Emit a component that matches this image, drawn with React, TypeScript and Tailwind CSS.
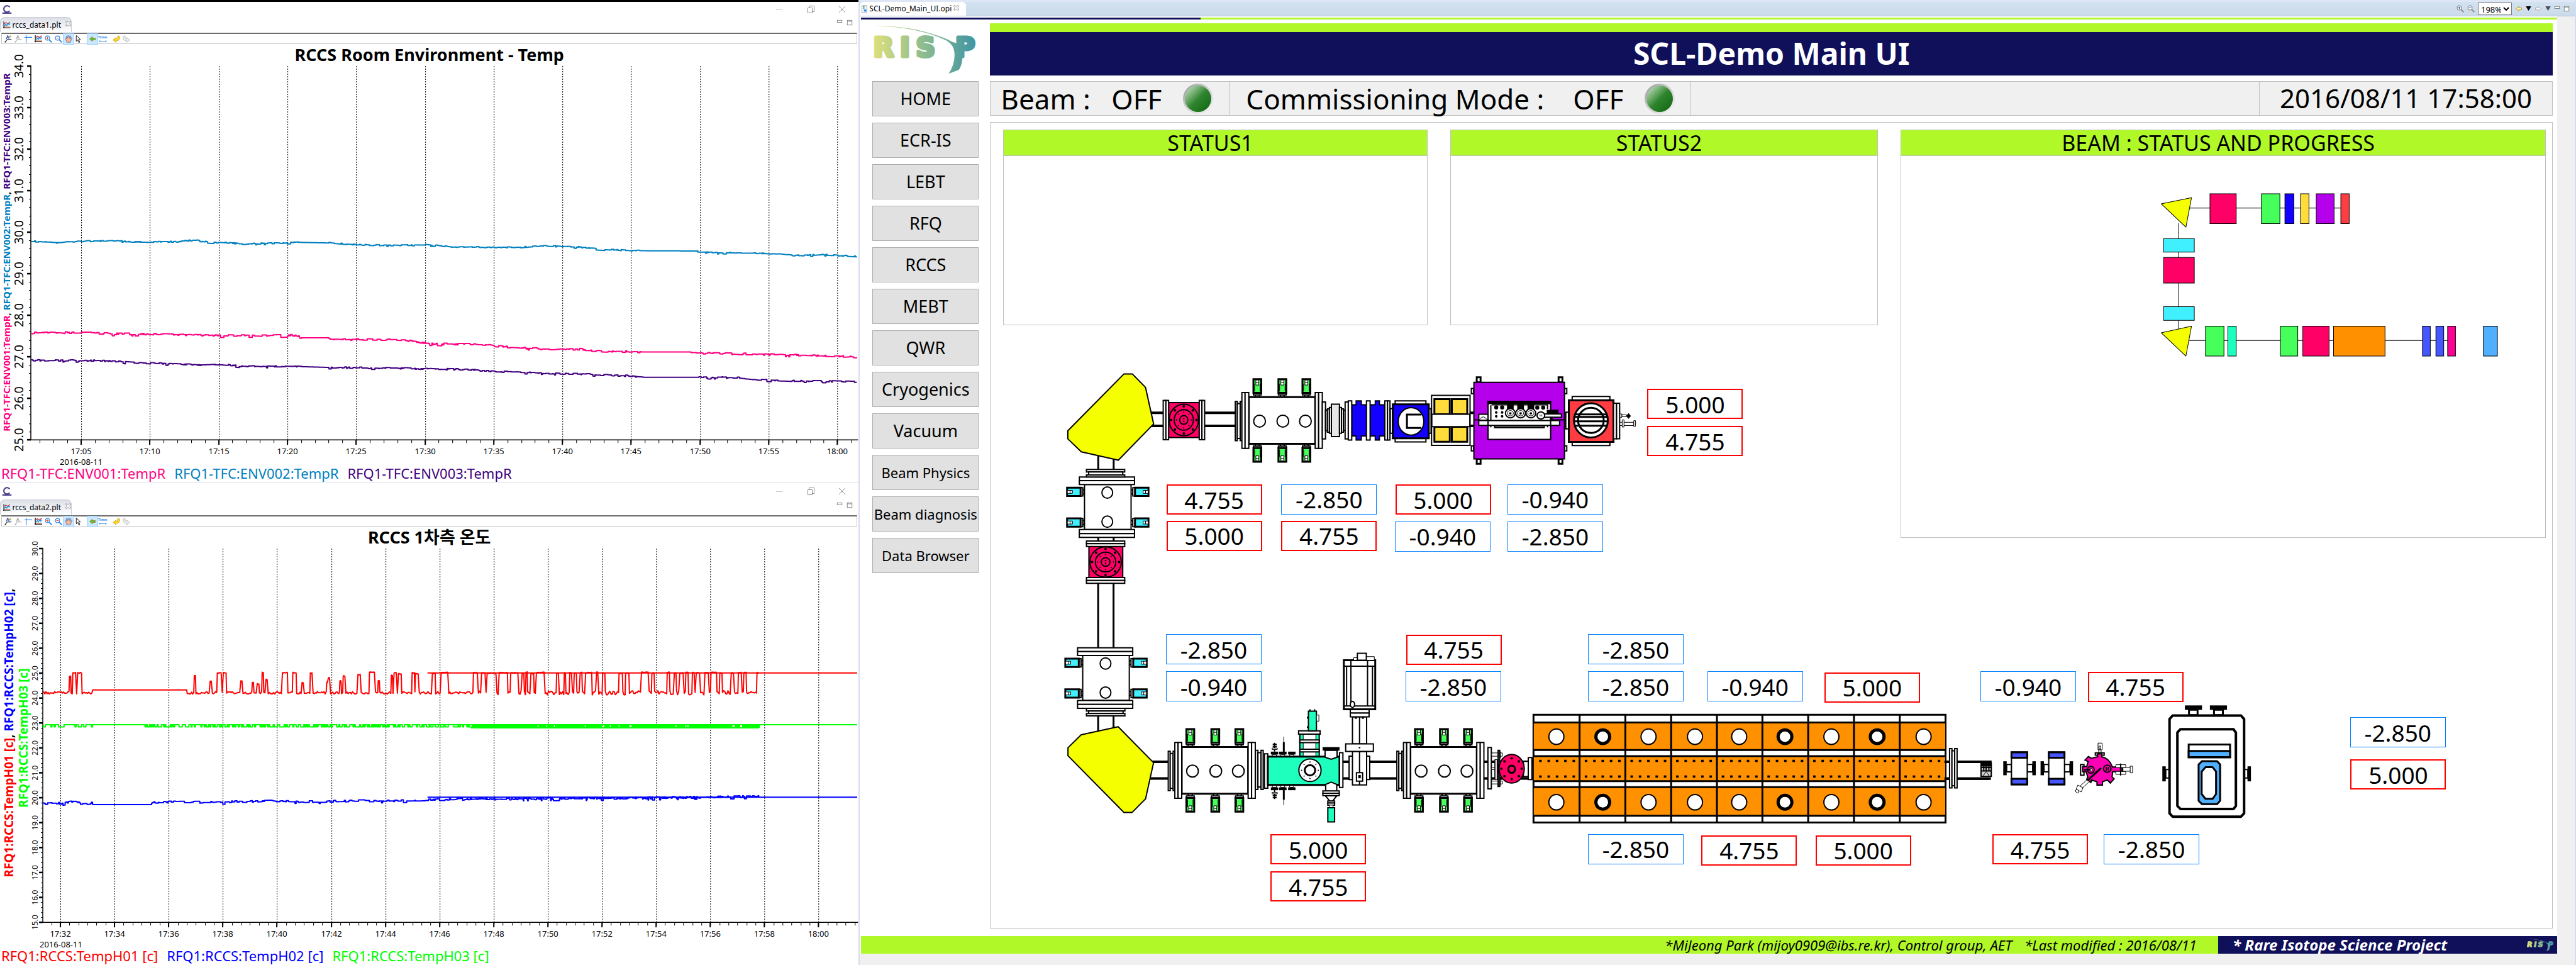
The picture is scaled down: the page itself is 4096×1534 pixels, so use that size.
import React from "react";

const PINK = "#ff0066";
const GREEN = "#46ff5a";
const BLUE = "#1400ff";
const YELLOW = "#ffdc3c";
const TEAL = "#1effbe";
const CYAN = "#41f0ff";
const ORANGE = "#ff9100";
const INDIGO = "#4656ff";
const SKY = "#50b0ff";

/* ---------- drawing primitives: edges are given as x1,y1,x2,y2 ---------- */

type BoxProps = { b: [number, number, number, number]; f?: string; w?: number };
const B = ({ b, f = "#fff", w = 2 }: BoxProps) => (
  <rect x={b[0]} y={b[1]} width={b[2] - b[0]} height={b[3] - b[1]} fill={f} stroke="#000" strokeWidth={w} vectorEffect="non-scaling-stroke" />
);
const E = ({ c, r, f = "#fff", w = 2 }: { c: [number, number]; r: [number, number]; f?: string; w?: number }) => (
  <ellipse cx={c[0]} cy={c[1]} rx={r[0]} ry={r[1]} fill={f} stroke="#000" strokeWidth={w} vectorEffect="non-scaling-stroke" />
);
const L = ({ d, w = 2 }: { d: string; w?: number }) => (
  <path d={d} fill="none" stroke="#000" strokeWidth={w} vectorEffect="non-scaling-stroke" />
);
const P = ({ p, f = "#fff", w = 2 }: { p: string; f?: string; w?: number }) => (
  <polygon points={p} fill={f} stroke="#000" strokeWidth={w} strokeLinejoin="round" vectorEffect="non-scaling-stroke" />
);
const Dots = ({ c, r, s }: { c: [number, number]; r: [number, number]; s: [number, number] }) => (
  <g>
    {[0, 1, 2, 3, 4, 5, 6, 7].map((k) => {
      const a = (k * Math.PI) / 4;
      return <ellipse key={k} cx={c[0] + r[0] * Math.cos(a)} cy={c[1] + r[1] * Math.sin(a)} rx={s[0]} ry={s[1]} fill="#000" />;
    })}
  </g>
);

const GreenPlug = ({ x }: { x: number }) => (
  <g>
    <B b={[x - 8, 248, x + 8, 265]} />
    <B b={[x - 16, 236, x + 16, 250]} />
    <B b={[x - 16, 144, x + 16, 236]} f={GREEN} w={3} />
    <B b={[x - 6, 150, x + 6, 184]} w={1} />
    <L d={`M${x - 6} 166H${x + 6}`} w={1} />
    <L d={`M${x - 11} 176V226M${x + 11} 176V226`} w={1} />
  </g>
);

const Chamber = () => (
  <g>
    <g>
      <GreenPlug x={844} />
      <GreenPlug x={946} />
      <GreenPlug x={1044} />
    </g>
    <g transform="translate(0 843) scale(1 -1)">
      <GreenPlug x={844} />
      <GreenPlug x={946} />
      <GreenPlug x={1044} />
    </g>
    <B b={[754, 293, 762, 557]} />
    <B b={[762, 308, 774, 542]} />
    <B b={[774, 293, 781, 557]} />
    <B b={[809, 265, 1080, 578]} w={3} />
    <B b={[781, 234, 794, 609]} />
    <B b={[794, 234, 809, 609]} />
    <B b={[1080, 234, 1094, 609]} />
    <B b={[1094, 234, 1109, 609]} />
    <E c={[853, 426]} r={[24, 40]} />
    <E c={[948, 426]} r={[24, 40]} />
    <E c={[1040, 426]} r={[24, 40]} />
  </g>
);

const CyanPlug = ({ y }: { y: number }) => (
  <g>
    <B b={[131, y + 14, 140, y + 42]} />
    <B b={[122, y, 132, y + 56]} />
    <B b={[68, y, 123, y + 56]} f={CYAN} w={3} />
    <B b={[69, y + 18, 90, y + 38]} w={1} />
    <L d={`M80 ${y + 18}V${y + 38}`} w={1} />
  </g>
);

const UprightChamber = () => (
  <g>
    {[873, 1079].map((y) => (
      <g key={y}>
        <CyanPlug y={y} />
        <g transform="translate(468 0) scale(-1 1)">
          <CyanPlug y={y} />
        </g>
      </g>
    ))}
    <B b={[139, 852, 329, 1154]} />
    <B b={[118, 801, 343, 826]} />
    <B b={[118, 826, 343, 852]} />
    <B b={[118, 1154, 343, 1181]} />
    <B b={[118, 1181, 343, 1207]} />
    <E c={[232, 906]} r={[22, 38]} />
    <E c={[232, 1101]} r={[22, 38]} />
  </g>
);

const Target = ({ c, r }: { c: [number, number]; r: [number, number] }) => (
  <g>
    <E c={c} r={r} f={PINK} />
    <Dots c={c} r={[r[0] * 0.86, r[1] * 0.86]} s={[5, 9]} />
    <E c={c} r={[r[0] * 0.65, r[1] * 0.65]} f={PINK} />
    <Dots c={c} r={[r[0] * 0.5, r[1] * 0.5]} s={[2, 5]} />
    <E c={c} r={[r[0] * 0.28, r[1] * 0.28]} f={PINK} />
    <ellipse cx={c[0]} cy={c[1] - 9} rx={3} ry={5} />
    <ellipse cx={c[0]} cy={c[1] + 9} rx={3} ry={5} />
  </g>
);

const UpperLine = () => (
  <g transform="translate(2350 800) scale(.54847 .33333)">
    <L d="M400 370H756M400 458H756" w={4} />
    <L d="M195 640V750M258 640V750M195 1200V1235M258 1200V1235" w={3} />
    <P p="300,109 334,109 388,200 421,445 277,688 126,632 71,545 71,491" f="#f5ff00" w={2} />
    <B b={[482, 302, 607, 536]} f={PINK} />
    <B b={[460, 287, 471, 551]} />
    <B b={[471, 287, 482, 551]} />
    <B b={[607, 287, 618, 551]} />
    <B b={[618, 287, 629, 551]} />
    <Target c={[544, 418]} r={[60, 106]} />
    <Chamber />
    <B b={[1109, 297, 1122, 546]} />
    <B b={[1122, 352, 1130, 490]} />
    <B b={[1130, 344, 1138, 500]} />
    <B b={[1138, 334, 1146, 508]} />
    <B b={[1146, 312, 1179, 530]} f="#e6e6e6" />
    <B b={[1179, 334, 1187, 508]} />
    <B b={[1187, 344, 1195, 500]} />
    <B b={[1195, 352, 1202, 490]} />
    <B b={[1202, 297, 1215, 546]} />
    <B b={[1247, 290, 1268, 553]} f={BLUE} />
    <B b={[1325, 290, 1342, 553]} f={BLUE} />
    <B b={[1229, 316, 1291, 526]} f={BLUE} />
    <B b={[1304, 316, 1364, 526]} f={BLUE} />
    <rect x={1249} y={296} width={17} height={250} fill={BLUE} />
    <rect x={1327} y={296} width={13} height={250} fill={BLUE} />
    <B b={[1215, 290, 1229, 553]} />
    <B b={[1289, 290, 1304, 553]} />
    <B b={[1364, 290, 1375, 553]} />
    <B b={[1375, 290, 1385, 553]} />
    <UprightChamber />
    <B b={[147, 750, 303, 767]} />
    <B b={[156, 767, 295, 787]} />
    <B b={[147, 787, 303, 801]} />
    <B b={[157, 1268, 295, 1476]} f={PINK} />
    <Target c={[225, 1372]} r={[64, 102]} />
    <B b={[147, 1231, 303, 1249]} />
    <B b={[147, 1249, 303, 1268]} />
    <B b={[147, 1476, 303, 1496]} />
    <B b={[147, 1496, 303, 1515]} />
  </g>
);

const SourceEnd = () => (
  <g transform="translate(3050 800) scale(.57398 .33333)">
    <B b={[105, 342, 114, 508]} />
    <B b={[255, 342, 264, 508]} />
    <B b={[124, 290, 244, 566]} />
    <B b={[115, 313, 255, 541]} f={BLUE} w={3} />
    <E c={[186, 428]} r={[50, 92]} />
    <L d="M226 382H170V472H226" w={3} />
    <L d="M414 370H434M414 458H434" w={4} />
    <B b={[266, 253, 416, 589]} />
    {[277, 345].map((x) => (
      <g key={x}>
        <B b={[x, 278, x + 60, 380]} f={YELLOW} w={3} />
        <B b={[x, 464, x + 60, 565]} f={YELLOW} w={3} />
      </g>
    ))}
    <B b={[267, 380, 415, 463]} />
    {[442, 761].map((x) => (
      <g key={x}>
        <B b={[x, 132, x + 15, 166]} w={3} />
        <B b={[x, 680, x + 15, 712]} w={3} />
      </g>
    ))}
    {[421, 784].map((x) => (
      <g key={x}>
        <B b={[x, 207, x + 9, 241]} />
        <B b={[x, 592, x + 9, 626]} />
      </g>
    ))}
    <B b={[431, 165, 784, 680]} f="#b400eb" />
    <L d="M431 418H784" />
    <B b={[486, 293, 730, 549]} />
    <B b={[450, 380, 486, 420]} />
    <L d="M453 415Q467 380 482 415" w={1} />
    <rect x={488} y={295} width={242} height={17} />
    <L d="M497 320V420M500 316H720M718 300V345" w={2} />
    {[518, 541].map((x) => (
      <g key={x}>
        <ellipse cx={x} cy={334} rx={8} ry={14} />
        <ellipse cx={x} cy={368} rx={5} ry={9} />
        <ellipse cx={x} cy={394} rx={5} ry={9} />
      </g>
    ))}
    {[573, 613, 653].map((x) => (
      <g key={x}>
        <rect x={x - 13} y={310} width={26} height={36} />
        <E c={[x, 373]} r={[19, 31]} />
        <E c={[x, 373]} r={[12, 18]} w={1} />
        <ellipse cx={x} cy={374} rx={5} ry={8} />
      </g>
    ))}
    <ellipse cx={678} cy={335} rx={8} ry={14} />
    <ellipse cx={701} cy={335} rx={8} ry={14} />
    <rect x={715} y={350} width={45} height={24} />
    <B b={[705, 378, 772, 400]} />
    <E c={[692, 388]} r={[15, 24]} />
    <L d="M689 382V394M696 382V394M748 346V366M760 346V366" w={1} />
    <rect x={728} y={398} width={10} height={22} />
    <B b={[450, 422, 765, 455]} />
    <L d="M486 420V456M730 420V456M718 455V468M497 455V468" />
    <B b={[512, 458, 705, 470]} f="#ddd" />
    <B b={[789, 366, 801, 478]} />
    <B b={[814, 260, 961, 590]} />
    <B b={[801, 286, 975, 566]} f="#ff3c41" w={3} />
    <E c={[887, 421]} r={[66, 115]} w={3} />
    <E c={[887, 421]} r={[50, 84]} w={3} />
    <L d="M825 381H950M822 398H953M822 427H953M825 457H950" w={3} />
    <B b={[975, 306, 987, 545]} />
    <B b={[987, 306, 999, 545]} />
    <B b={[1000, 378, 1008, 400]} w={1} />
    <B b={[1008, 384, 1026, 396]} w={1} />
    <polygon points="1024,391 1034,372 1043,391 1034,410" />
    <B b={[1000, 434, 1054, 456]} w={1} />
    <B b={[1009, 418, 1016, 466]} w={1} />
    <B b={[1054, 423, 1061, 461]} w={1} />
  </g>
);

const Needles = () => (
  <g>
    {[716, 743, 772].map((x) => (
      <g key={x}>
        <rect x={x} y={829} width={24} height={13} />
        <B b={[x + 5, 842, x + 18, 853]} w={1} />
      </g>
    ))}
    <L d="M728 788V829M722 795H735M722 805H735" />
    <B b={[720, 812, 737, 819]} w={1} />
    <L d="M758 760V829" w={1} />
    <L d="M758 785V829" w={3} />
  </g>
);

const LowerLine = () => (
  <g transform="translate(2350 1280) scale(.68878 .48469)">
    <L d="M155 50V350M205 50V350M155 660V740M205 660V740" w={3} />
    <B b={[117, 629, 242, 641]} />
    <B b={[124, 641, 236, 653]} />
    <B b={[117, 653, 242, 664]} />
    <L d="M320 876H404M320 953H404M948 876H1128M948 953H1128M1405 876H1568M1405 953H1568" w={4} />
    <P p="220,714 335,880 309,1047 265,1110 239,1110 57,848 57,811 100,751" f="#f5ff00" />
    <B b={[666, 823, 674, 1004]} />
    <B b={[674, 834, 684, 992]} />
    <B b={[684, 823, 691, 1004]} />
    <B b={[695, 839, 706, 998]} />
    <Needles />
    <g transform="translate(0 1836) scale(1 -1)">
      <Needles />
    </g>
    <B b={[810, 748, 873, 853]} f={TEAL} />
    <B b={[821, 748, 862, 853]} w={1} />
    <B b={[806, 733, 876, 748]} />
    <B b={[810, 775, 873, 787]} />
    <B b={[810, 818, 873, 830]} />
    <B b={[838, 642, 864, 733]} f={TEAL} />
    <B b={[864, 660, 872, 688]} w={1} />
    <L d="M843 633V642M858 633V642M835 668V676M835 712V720" />
    <B b={[706, 852, 939, 983]} f={TEAL} w={3} />
    <path d="M892 823V855L912 864L931 855V823Z" fill="#fff" stroke="#000" strokeWidth={2} vectorEffect="non-scaling-stroke" />
    <rect x={884} y={808} width={55} height={16} />
    <path d="M894 1012V980L912 970L930 980V1012Z" fill="#fff" stroke="#000" strokeWidth={2} vectorEffect="non-scaling-stroke" />
    <B b={[885, 1010, 938, 1021]} />
    <B b={[885, 1021, 938, 1032]} />
    <P p="893,1033 930,1033 916,1058 908,1058" />
    <B b={[901, 1057, 923, 1066]} />
    <B b={[901, 1066, 923, 1076]} />
    <B b={[906, 1076, 918, 1088]} w={1} />
    <B b={[901, 1088, 923, 1153]} f={TEAL} />
    <E c={[843, 915]} r={[36, 52]} />
    <Dots c={[843, 915]} r={[27, 38]} s={[2, 3]} />
    <E c={[843, 915]} r={[17, 24]} w={3} />
    <B b={[939, 834, 950, 994]} />
    <B b={[970, 850, 982, 958]} />
    <B b={[1027, 850, 1037, 958]} />
    <B b={[981, 668, 1027, 793]} />
    <B b={[981, 828, 1027, 983]} />
    <L d="M1004 668V793M1004 828V983" />
    <B b={[959, 793, 1049, 828]} />
    <circle cx={1004} cy={811} r={3} />
    <B b={[994, 926, 1014, 965]} />
    <rect x={1000} y={937} width={8} height={15} />
    <B b={[974, 633, 1035, 651]} />
    <B b={[974, 651, 1035, 668]} />
    <L d="M992 668V678M1015 668V678" w={3} />
    <B b={[953, 407, 1055, 633]} w={3} />
    <L d="M953 434H1055M953 618H1055M962 434V618M976 407V618M1030 407V618M1046 434V618" />
    <E c={[981, 611]} r={[7, 14]} />
    <B b={[985, 395, 997, 407]} w={1} />
    <B b={[1026, 390, 1052, 407]} w={1} />
    <B b={[997, 375, 1026, 407]} />
    <B b={[1421, 810, 1432, 1001]} />
    <B b={[1433, 835, 1468, 850]} w={1} />
    <B b={[1433, 965, 1468, 978]} w={1} />
    <B b={[1433, 902, 1455, 912]} w={1} />
    <B b={[1443, 866, 1455, 958]} w={1} />
    <L d="M1447 866V958M1451 866V958M1463 828V860M1463 955V988" w={1} />
    <B b={[1454, 823, 1459, 990]} />
    <B b={[1536, 874, 1552, 944]} w={2} />
    <B b={[1552, 856, 1564, 958]} />
    <E c={[1498, 908]} r={[41, 66]} f={PINK} />
    <Dots c={[1498, 908]} r={[33, 48]} s={[4, 6]} />
    <E c={[1498, 910]} r={[11, 17]} f={PINK} w={3} />
  </g>
);

const Cavity = () => (
  <g transform="translate(3350 1560) scale(.70153 .33333)">
    <B b={[115, 118, 1429, 841]} w={3} />
    <rect x={116} y={173} width={1312} height={180} fill={ORANGE} />
    <rect x={116} y={400} width={1312} height={162} fill={ORANGE} />
    <rect x={116} y={608} width={1312} height={188} fill={ORANGE} />
    <L d="M113 170H1430M113 354H1430M113 396H1430M113 564H1430M113 604H1430M113 796H1430" w={3} />
    <L d="M262 118V841M408 118V841M554 118V841M700 118V841M845 118V841M991 118V841M1137 118V841M1283 118V841" w={3} />
    {[188, 336, 482, 630, 771, 917, 1065, 1211, 1359].map((x, i) => {
      const heavy = i === 1 || i === 5 || i === 7;
      return (
        <g key={x}>
          <E c={[x, 265]} r={heavy ? [22, 46] : [24, 52]} w={heavy ? 5 : 2} />
          <E c={[x, 705]} r={heavy ? [22, 46] : [24, 52]} w={heavy ? 5 : 2} />
          {[0, 1, 2, 3, 4].map((k) => (
            <g key={k}>
              <rect x={133 + i * 145.6 + k * 26.6} y={420} width={8} height={15} />
              <rect x={133 + i * 145.6 + k * 26.6} y={525} width={8} height={15} />
            </g>
          ))}
        </g>
      );
    })}
    <L d="M1430 434H1568M1430 547H1568" w={4} />
  </g>
);

const Magnet = () => (
  <g>
    <B b={[182, 692, 196, 741]} />
    <B b={[242, 692, 258, 741]} />
    <rect x={172} y={670} width={10} height={94} />
    <rect x={257} y={670} width={10} height={94} />
    <B b={[196, 607, 242, 827]} />
    <B b={[196, 610, 242, 646]} f={INDIGO} w={3} />
    <B b={[196, 788, 242, 826]} f={INDIGO} w={3} />
  </g>
);

const DumpEnd = () => (
  <g transform="translate(4350 1480) scale(.76531 .33333)">
    <L d="M0 674H138M0 787H136" w={4} />
    <B b={[15, 585, 22, 849]} />
    <B b={[22, 600, 30, 834]} />
    <B b={[30, 585, 37, 849]} />
    <B b={[107, 682, 137, 772]} f="#ccc" />
    <path d="M107 674H137V705H107Z" />
    <L d="M115 690V735M122 690V735M130 690V735M107 735H137M107 712H137" />
    <P p="113,770 122,738 131,770" f="#ddd" w={1} />
    <Magnet />
    <g transform="translate(109 0)">
      <Magnet />
    </g>
    <B b={[398, 692, 408, 763]} />
    <B b={[449, 548, 461, 593]} w={1} />
    <B b={[452, 568, 457, 584]} w={1} />
    <B b={[451, 593, 458, 615]} w={1} />
    <B b={[441, 613, 467, 629]} />
    <path
      fill="#ff00b4"
      stroke="#000"
      strokeWidth={2}
      vectorEffect="non-scaling-stroke"
      d="M404 705H416L420 672L411 662L421 638L429 650L448 640V620H460V640Q482 650 491 708H520V740H492L490 775L496 788L485 816L476 795L462 808V830H446V808L430 795L428 812L416 792L419 775L414 740H404Z"
    />
    <B b={[501, 693, 530, 712]} w={1} />
    <B b={[501, 738, 530, 758]} w={1} />
    <L d="M515 685V765M520 712V740" />
    <B b={[522, 712, 545, 737]} w={1} />
    <B b={[543, 703, 550, 748]} w={1} />
    <E c={[428, 727]} r={[10, 23]} f="#ff00b4" />
    <E c={[428, 727]} r={[4, 10]} w={1} />
    <E c={[476, 720]} r={[11, 24]} f="#ff00b4" />
    <L d="M473 708V732M479 708V732M408 727H428" w={2} />
    <P p="416,795 424,806 404,848 396,838" w={1} />
    <P p="390,830 405,848 400,876 385,858" w={1} />
    <P p="386,858 394,868 390,884 382,872" w={1} />
    <L d="M458 715L418 800" w={3} />
    <B b={[715, 324, 740, 360]} w={3} />
    <B b={[788, 324, 814, 360]} w={3} />
    <rect x={703} y={295} width={50} height={30} />
    <rect x={776} y={295} width={50} height={30} />
    <B b={[647, 725, 658, 782]} />
    <B b={[876, 725, 887, 782]} />
    <rect x={637} y={704} width={10} height={101} />
    <rect x={886} y={704} width={10} height={101} />
    <P p="667,363 867,363 876,387 876,1020 867,1042 667,1042 658,1020 658,387" w={4} />
    <P p="690,455 845,455 852,477 852,970 845,990 690,990 681,970 681,477" w={4} />
    <B b={[714, 558, 835, 644]} w={3} />
    <B b={[714, 601, 835, 642]} f={SKY} w={3} />
    <P p="753,669 797,669 806,692 806,935 797,958 753,958 743,935 743,692" f={SKY} w={3} />
    <P p="763,710 784,710 794,740 794,890 784,922 763,922 752,890 752,740" w={3} />
  </g>
);

const Beamline = () => (
  <svg className="absolute inset-0 h-full w-full" viewBox="2216 274 3493 1802" preserveAspectRatio="none" aria-hidden="true">
    <UpperLine />
    <SourceEnd />
    <LowerLine />
    <g transform="translate(-150 783.3)">
      <g transform="translate(2350 800) scale(.54847 .33333)">
        <Chamber />
      </g>
    </g>
    <g transform="translate(361.5 783.3)">
      <g transform="translate(2350 800) scale(.54847 .33333)">
        <Chamber />
      </g>
    </g>
    <g transform="translate(-4 382.5)">
      <g transform="translate(2350 800) scale(.54847 .33333)">
        <UprightChamber />
      </g>
    </g>
    <Cavity />
    <DumpEnd />
  </svg>
);

const MiniBeamline = () => {
  const top: [number, number, string][] = [
    [913, 960, PINK],
    [1005, 1038, GREEN],
    [1047, 1063, BLUE],
    [1075, 1090, YELLOW],
    [1103, 1135, "#b400eb"],
    [1147, 1162, "#ff3c41"],
  ];
  const bottom: [number, number, string][] = [
    [905, 938, GREEN],
    [945, 960, TEAL],
    [1039, 1070, GREEN],
    [1079, 1126, PINK],
    [1134, 1226, ORANGE],
    [1293, 1307, INDIGO],
    [1317, 1331, INDIGO],
    [1338, 1352, "#ff0096"],
    [1402, 1427, SKY],
  ];
  return (
    <svg className="block w-full" viewBox="4252 348 1442 853" aria-label="Beam progress">
      <g transform="translate(3800 0) scale(1.25255 .77806)">
        <L d="M875 597H1163M875 978H1345M857 640V945" w={1} />
        <P p="826,585 880,567 870,652" f="#f5ff00" w={1} />
        <P p="826,956 880,937 870,1023" f="#f5ff00" w={1} />
        {top.map(([a, b, f]) => (
          <B key={a} b={[a, 556, b, 642]} f={f} w={1} />
        ))}
        {bottom.map(([a, b, f]) => (
          <B key={a} b={[a, 937, b, 1023]} f={f} w={1} />
        ))}
        <B b={[830, 685, 885, 724]} f={CYAN} w={1} />
        <B b={[830, 739, 885, 813]} f={PINK} w={1} />
        <B b={[830, 881, 885, 920]} f={CYAN} w={1} />
      </g>
    </svg>
  );
};

/* ---------- readings on the synoptic canvas ---------- */

const READINGS: [number, number, string][] = [
  [3685, 870, "5.000"],
  [3685, 953, "4.755"],
  [2609, 1084, "4.755"],
  [2866, 1083, "-2.850"],
  [3121, 1084, "5.000"],
  [3372, 1083, "-0.940"],
  [2609, 1165, "5.000"],
  [2866, 1165, "4.755"],
  [3120, 1166, "-0.940"],
  [3372, 1166, "-2.850"],
  [2608, 1419, "-2.850"],
  [2608, 1502, "-0.940"],
  [3145, 1420, "4.755"],
  [3144, 1502, "-2.850"],
  [2842, 1867, "5.000"],
  [2842, 1950, "4.755"],
  [3552, 1419, "-2.850"],
  [3552, 1502, "-2.850"],
  [3819, 1502, "-0.940"],
  [4081, 1504, "5.000"],
  [3552, 1866, "-2.850"],
  [3806, 1869, "4.755"],
  [4061, 1869, "5.000"],
  [4430, 1502, "-0.940"],
  [4670, 1503, "4.755"],
  [5257, 1605, "-2.850"],
  [5258, 1699, "5.000"],
  [4457, 1867, "4.755"],
  [4706, 1866, "-2.850"],
];

const Readings = () => (
  <>
    {READINGS.map(([x, y, v]) => (
      <output
        key={`${x}-${y}`}
        className={
          v.startsWith("-")
            ? "absolute flex h-12 w-[152px] items-center justify-center border border-[#0080ff] bg-white text-[37px] leading-none"
            : "absolute flex h-12 w-[152px] items-center justify-center border-2 border-[#ff0000] bg-white text-[37px] leading-none"
        }
        style={{ left: `${((x - 2216) / 3493) * 100}%`, top: `${((y - 274) / 1802) * 100}%` }}
      >
        {v}
      </output>
    ))}
  </>
);

/* ---------- trend charts ---------- */

const rng = (seed: number) => () => {
  seed = (seed * 1664525 + 1013904223) % 4294967296;
  return seed / 4294967296;
};

type Pt = [number, number];

const at = (pts: Pt[], x: number) => {
  for (let i = 1; i < pts.length; i++) {
    if (x <= pts[i][0]) {
      const [x0, y0] = pts[i - 1];
      const [x1, y1] = pts[i];
      return x1 === x0 ? y1 : y0 + ((y1 - y0) * (x - x0)) / (x1 - x0);
    }
  }
  return pts[pts.length - 1][1];
};

const noisy = (pts: Pt[], amp: number, flats: Pt[], seed: number, denseFrom = 99999) => {
  const r = rng(seed);
  const out: string[] = [];
  const end = pts[pts.length - 1][0];
  let level = 0;
  for (let x = pts[0][0]; x <= end; x += x > denseFrom ? 1 : 2) {
    const flat = flats.some(([a, b]) => x >= a && x <= b);
    if (r() < 0.5) level = (r() - 0.5) * amp;
    if (r() < 0.02) level = amp;
    const y = at(pts, x) + (flat ? 0 : level);
    out.push(`${out.length ? "H" : "M"}${x}`, out.length ? `V${y.toFixed(1)}` : ` ${y.toFixed(1)}`);
  }
  return out.join("");
};

const BLUE_T: Pt[] = [[57, 784], [110, 788], [135, 784], [170, 783], [215, 781], [240, 786], [320, 785], [360, 779], [380, 786], [410, 788], [445, 792], [500, 790], [545, 787], [600, 789], [650, 794], [700, 797], [800, 796], [825, 804], [860, 802], [945, 804], [985, 798], [1060, 803], [1090, 808], [1150, 814], [1274, 815], [1276, 820], [1350, 821], [1400, 822], [1450, 830], [1505, 827], [1566, 833]];
const PINK_T: Pt[] = [[57, 1081], [160, 1080], [200, 1084], [320, 1086], [400, 1090], [540, 1089], [550, 1097], [600, 1097], [602, 1102], [740, 1104], [780, 1116], [880, 1119], [940, 1129], [1020, 1134], [1060, 1134], [1090, 1140], [1170, 1143], [1259, 1143], [1262, 1148], [1300, 1147], [1400, 1151], [1500, 1155], [1566, 1159]];
const PURPLE_T: Pt[] = [[57, 1170], [200, 1172], [240, 1178], [300, 1181], [370, 1186], [400, 1183], [440, 1189], [540, 1190], [600, 1193], [740, 1196], [850, 1200], [920, 1207], [1020, 1213], [1100, 1217], [1150, 1221], [1175, 1225], [1275, 1225], [1350, 1227], [1380, 1233], [1440, 1236], [1566, 1240]];
const BLUE_W: Pt[] = [[79, 1045], [110, 1044], [133, 1039], [150, 1045], [167, 1043], [170, 1048], [275, 1048], [279, 1040], [400, 1040], [500, 1036], [560, 1038], [640, 1036], [720, 1035], [850, 1030], [1000, 1028], [1150, 1027], [1387, 1021]];

const redPulses = () => {
  const r = rng(11);
  const hi: [number, number, number][] = [
    [127, 129, 630], [133, 138, 619], [142, 149, 619], [355, 357, 628], [384, 386, 645], [397, 404, 619], [408, 413, 619],
    [440, 442, 646], [461, 463, 650], [470, 473, 655], [479, 481, 618], [486, 488, 641], [516, 525, 619], [535, 541, 619],
    [552, 554, 651], [567, 570, 620], [597, 598, 650], [600, 602, 636], [621, 623, 645], [627, 630, 630], [654, 658, 625],
    [675, 684, 617], [691, 693, 645], [715, 717, 628], [720, 724, 619], [728, 733, 622], [753, 757, 619], [759, 764, 622],
    [790, 795, 621], [806, 818, 618], [865, 872, 619],
  ];
  let x = 880;
  while (x < 1380) {
    const w = 2 + r() * (r() < 0.4 ? 16 : 4);
    hi.push([Math.round(x), Math.round(x + w), 617 + r() * 5]);
    x += w + 4 + r() * (r() < 0.3 ? 22 : 7);
  }
  hi.push([1383, 1387, 619]);
  let d = "M79 680";
  for (let px = 79; px <= 1387; px += 1) {
    const pulse = hi.find(([a, b]) => px >= a && px <= b);
    const flat = px >= 169 && px <= 341;
    const y = pulse ? pulse[2] + (r() - 0.5) * 3 : flat ? 675 : 684 + (r() - 0.5) * (px > 860 ? 14 : 8);
    if (pulse || flat || px % 2 === 0) d += `L${px} ${y.toFixed(1)}`;
  }
  return d;
};

const greenPulses = () => {
  const r = rng(5);
  let d = "M79 788";
  let low = false;
  for (let x = 79; x <= 1387; x += 2) {
    const flat = x >= 169 && x <= 263;
    const toggle = x > 860 ? 0.95 : x > 263 ? 0.55 : 0.3;
    if (flat) low = false;
    else if (r() < toggle) low = !low;
    d += `H${x}V${low ? (x > 860 ? 798 : 795) : 788}`;
  }
  return d;
};

type ChartProps = {
  left: number;
  top: number;
  bottom: number;
  max: number;
  count: number;
  labelX: number;
  labelSize: number;
  first: number;
  step: number;
  minor: number;
  times: string[];
  dateX: number;
  children: React.ReactNode;
};

const Chart = ({ left, top, bottom, max, count, labelX, labelSize, first, step, minor, times, dateX, children }: ChartProps) => {
  const dy = (bottom - top) / count;
  const rows = Array.from({ length: count + 1 }, (_, i) => i);
  let minors = "";
  for (let i = 0; i < count * 5; i++) minors += `M${left - 3} ${Math.round(top + (i * dy) / 5) + 0.5}H${left}`;
  for (let x = first - step; x < 1364; x += step / minor) if (x > left) minors += `M${Math.round(x) + 0.5} ${bottom}V${bottom + 5}`;
  return (
    <svg className="block w-full overflow-visible" viewBox="0 103 1365 640">
      {times.map((t, i) => {
        const x = Math.round(first + i * step);
        return (
          <g key={t}>
            <path d={`M${x + 0.5} ${top}V${bottom}`} stroke="#000" strokeWidth={1} strokeDasharray="2 2" />
            <path d={`M${x} ${bottom}V${bottom + 8}`} stroke="#000" strokeWidth={2} />
            <text x={x} y={bottom + 23} fontSize={13} textAnchor="middle">
              {t}
            </text>
          </g>
        );
      })}
      <text x={dateX} y={bottom + 40} fontSize={13}>
        2016-08-11
      </text>
      <path d={minors} stroke="#000" strokeWidth={1} />
      <path d={`M${left} ${top - 1}V${bottom}H1364`} fill="none" stroke="#000" strokeWidth={1.5} />
      {rows.map((i) => {
        const y = top + i * dy;
        return (
          <g key={i}>
            <path d={`M${left - 6} ${y}H${left}`} stroke="#000" strokeWidth={2.5} />
            <text transform={`translate(${labelX} ${y}) rotate(-90)`} fontSize={labelSize} textAnchor="middle">
              {(max - i).toFixed(1)}
            </text>
          </g>
        );
      })}
      {children}
    </svg>
  );
};

const Trace = ({ d, c }: { d: string; c: string }) => (
  <path d={d} fill="none" stroke={c} strokeWidth={2} strokeLinejoin="round" vectorEffect="non-scaling-stroke" />
);

/* ---------- small icons ---------- */

const Icon = ({ children }: { children: React.ReactNode }) => (
  <svg className="size-[12px]" viewBox="0 0 16 16" fill="none" strokeWidth={1.5} aria-hidden="true">
    {children}
  </svg>
);
const PlotIcon = () => (
  <Icon>
    <rect x="2" y="1" width="14" height="12" fill="#d5f4fb" />
    <path d="M1.5 0V15M0 13.5H16" stroke="#000" />
    <path d="M3 5L6 2L10 5L15 1" stroke="#e02020" />
    <path d="M3 10L6 6L8 9L11 4L13 7L15 4" stroke="#1e78d2" />
    <path d="M3 12H15" stroke="#ff7040" />
  </Icon>
);
const CloseIcon = () => (
  <svg className="size-[9px]" viewBox="0 0 10 10" fill="#fff" stroke="#888" aria-hidden="true">
    <path d="M1 1H3L5 3L7 1H9V3L7 5L9 7V9H7L5 7L3 9H1V7L3 5L1 3Z" />
  </svg>
);
const AnnotateIcon = ({ on }: { on: boolean }) => (
  <Icon>
    <path d="M4 8L7 0L10 8M5 5H9" stroke={on ? "#2458c8" : "#a8a8a8"} />
    <path d="M2 14L6 9H15" stroke={on ? "#222" : "#a8a8a8"} />
    <circle cx="2" cy="14" r="1.5" fill={on ? "#222" : "#a8a8a8"} />
    {on && <path d="M12 0V6M9 3H15" stroke="#c89a30" />}
  </Icon>
);
const AxisIcon = () => (
  <Icon>
    <path d="M3.5 0V16M0 4.5H16" stroke="#2a86e8" />
  </Icon>
);
const ZoomIcon = ({ plus, tone }: { plus: boolean; tone: string }) => (
  <Icon>
    <circle cx="6" cy="6" r="4.5" fill="#fff" stroke={tone} />
    <path d="M9.500 9.500L15 15" stroke={tone} strokeWidth={2.5} />
    <path d={plus ? "M3.500 6H8.500M6 3.500V8.500" : "M3.500 6H8.500"} stroke={tone === "#8a8a8a" ? "#2a62c8" : "#f05020"} />
  </Icon>
);
const HandIcon = () => (
  <Icon>
    <path d="M4 15L3 11L0 7L2 6L4 8L3 2L5 1.500L6 6L7 0.500H9L9.500 6L11 1.500L13 2L12 8L14 5L15.500 6L13 12L12 15Z" fill="#ffb48c" stroke="#3d78c8" strokeWidth={1} />
  </Icon>
);
const PointerIcon = () => (
  <Icon>
    <path d="M3 0.500V13L6 10L8.500 15.500L10.500 14.500L8 9H12Z" fill="#fff" stroke="#000" strokeWidth={1.2} />
  </Icon>
);
const ArrowIcon = ({ fill, stroke, flip }: { fill: string; stroke: string; flip?: boolean }) => (
  <Icon>
    <path d={flip ? "M14 8L8 3V6H2V10H8V13Z" : "M2 8L8 3V6H14V10H8V13Z"} fill={fill} stroke={stroke} strokeWidth={1.2} />
  </Icon>
);
const TurnIcon = ({ fill, stroke, flip }: { fill: string; stroke: string; flip?: boolean }) => (
  <Icon>
    <g transform={flip ? "translate(16 0) scale(-1 1)" : undefined}>
      <path d="M1 10L7 5V8Q11 8 11 1L15 3Q16 12 7 12V15Z" fill={fill} stroke={stroke} strokeWidth={1} />
    </g>
  </Icon>
);
const TimeIcon = () => (
  <span className="flex w-[14px] flex-col items-center">
    <span className="text-[6px] font-bold leading-[7px] text-[#2a86e8]">Time</span>
    <svg className="h-[5px] w-[13px]" viewBox="0 0 16 6" fill="none" stroke="#2a86e8" aria-hidden="true">
      <path d="M1 3H15M3 1L1 3L3 5M13 1L15 3L13 5" />
    </svg>
  </span>
);
const PaneIcon = ({ full }: { full?: boolean }) => (
  <svg className="size-[10px]" viewBox="0 0 12 12" fill="#fff" stroke="#777" aria-hidden="true">
    {full ? (
      <>
        <rect x="1.500" y="1.500" width="9" height="9" />
        <path d="M1.500 3.500H10.500" />
      </>
    ) : (
      <rect x="1.500" y="1.500" width="9" height="4" />
    )}
  </svg>
);

const TOOLS: [string, React.ReactNode, string][] = [
  ["Add annotation", <AnnotateIcon on />, "plain"],
  ["Remove annotation", <AnnotateIcon on={false} />, "plain"],
  ["Crosshair", <AxisIcon />, "plain"],
  ["Stagger axes", <PlotIcon />, "plain"],
  ["Zoom in", <ZoomIcon plus tone="#2a86e8" />, "plain"],
  ["Zoom out", <ZoomIcon plus={false} tone="#2a86e8" />, "plain"],
  ["Pan", <HandIcon />, "active"],
  ["Pointer", <PointerIcon />, "plain"],
  ["Scroll", <ArrowIcon fill="#50c840" stroke="#a08020" />, "active gap"],
  ["Time range", <TimeIcon />, "plain"],
  ["Undo", <TurnIcon fill="#ffd820" stroke="#b89010" />, "plain gap"],
  ["Redo", <TurnIcon fill="#eee" stroke="#aaa" flip />, "plain"],
];

const PlotWindow = ({
  first,
  file,
  title,
  legend,
  children,
}: {
  first?: boolean;
  file: string;
  title: string;
  legend: [string, string][];
  children: React.ReactNode;
}) => (
  <section className={first ? "border-t-[3px] border-black" : "border-t border-[#dcdfe8]"}>
    <div className={first ? "flex h-6 items-center justify-between pl-[3px] pr-5" : "flex h-[26px] items-center justify-between pl-[3px] pr-5"}>
      <svg className="size-4" viewBox="0 0 22 22" fill="none" aria-hidden="true">
        <path d="M17 6A7 7 0 1 0 17 14" stroke="#4a3f8c" strokeWidth="3" />
        <path d="M1 19H21" stroke="#4a3f8c" strokeWidth="3" />
      </svg>
      <div className="flex items-center gap-[38px] text-[#8a8a8a]">
        <button aria-label="Minimize" className="flex">
          <svg className="size-3" viewBox="0 0 12 12" stroke="#c4c4c4"><path d="M1 6.500H11" /></svg>
        </button>
        <button aria-label="Restore" className="flex">
          <svg className="size-3" viewBox="0 0 12 12" fill="none" stroke="currentColor"><path d="M1.500 3.500H8.500V11.500H1.500ZM3.500 3.500V0.500H11.500V9.500H8.500" /></svg>
        </button>
        <button aria-label="Close" className="flex">
          <svg className="size-3" viewBox="0 0 12 12" stroke="currentColor"><path d="M1 1L11 11M11 1L1 11" /></svg>
        </button>
      </div>
    </div>
    <div className="flex h-[25px] items-start justify-between pr-[9px]">
      <div className="flex h-6 w-[114px] items-center gap-[3px] rounded-t-lg border border-b-0 border-[#c8ccd8] bg-linear-to-b from-[#dcdfe6] to-white pl-1 text-[12px]">
        <PlotIcon />
        <span>{file}</span>
        <button aria-label="Close tab" className="mb-1 ml-1">
          <CloseIcon />
        </button>
      </div>
      <div className="flex gap-[6px] pt-1">
        <PaneIcon />
        <PaneIcon full />
      </div>
    </div>
    <div className="mx-[2px] flex h-[18px] items-center border-x border-b border-t-2 border-[#c8c8c8] border-t-[#6e6e6e] pl-[2px]" role="toolbar">
      {TOOLS.map(([name, icon, kind]) => (
        <button
          key={name}
          aria-label={name}
          className={
            kind === "active"
              ? "flex h-4 w-4 items-center justify-center bg-[#cce8ff] outline outline-1 outline-[#99d1ff]"
              : kind === "active gap"
                ? "ml-[6px] flex h-4 w-4 items-center justify-center bg-[#cce8ff] outline outline-1 outline-[#99d1ff]"
                : kind === "plain gap"
                  ? "ml-[6px] flex h-4 w-4 items-center justify-center"
                  : "flex h-4 w-4 items-center justify-center"
          }
        >
          {icon}
        </button>
      ))}
    </div>
    <h2 className="h-[33px] text-center text-[27px] font-bold leading-[34px]">{title}</h2>
    {children}
    <div className="flex h-6 gap-[14px] pl-[2px] text-[22px] leading-[18px]">
      {legend.map(([t, c]) => (
        <span key={t} className={c}>
          {t}
        </span>
      ))}
    </div>
  </section>
);

const minutes = (from: number, n: number, step: number) =>
  Array.from({ length: n }, (_, i) => {
    const m = from + i * step;
    return `${17 + Math.floor(m / 60)}:${String(m % 60).padStart(2, "0")}`;
  });

const RoomPlot = () => (
  <PlotWindow
    first
    file="rccs_data1.plt"
    title="RCCS Room Environment - Temp"
    legend={[
      ["RFQ1-TFC:ENV001:TempR", "text-[#ff0080]"],
      ["RFQ1-TFC:ENV002:TempR", "text-[#0080c0]"],
      ["RFQ1-TFC:ENV003:TempR", "text-[#400080]"],
    ]}
  >
    <Chart left={49} top={105} bottom={699} max={34} count={9} labelX={37} labelSize={19} first={129} step={109.3} minor={5} times={minutes(5, 12, 5)} dateX={95}>
      <text transform="translate(16 401) rotate(-90)" fontSize={15} fontWeight={700} textAnchor="middle">
        <tspan fill="#ff0080">RFQ1-TFC:ENV001:TempR</tspan>
        <tspan>, </tspan>
        <tspan fill="#0080c0">RFQ1-TFC:ENV002:TempR</tspan>
        <tspan>, </tspan>
        <tspan fill="#400080">RFQ1-TFC:ENV003:TempR</tspan>
      </text>
      <g transform="scale(.87014 .48946)">
        <Trace c="#0080c0" d={noisy(BLUE_T, 4, [[545, 600], [1170, 1274]], 3)} />
        <Trace c="#ff0080" d={noisy(PINK_T, 6, [[550, 600], [1170, 1260]], 7)} />
        <Trace c="#400080" d={noisy(PURPLE_T, 5, [[550, 600], [1175, 1276]], 9)} />
      </g>
    </Chart>
  </PlotWindow>
);

const WaterPlot = () => (
  <PlotWindow
    file="rccs_data2.plt"
    title="RCCS 1차측 온도"
    legend={[
      ["RFQ1:RCCS:TempH01 [c]", "text-[#ff0000]"],
      ["RFQ1:RCCS:TempH02 [c]", "text-[#0000ff]"],
      ["RFQ1:RCCS:TempH03 [c]", "text-[#00ff00]"],
    ]}
  >
    <Chart left={68} top={105} bottom={699} max={30} count={15} labelX={60} labelSize={12} first={96} step={86.1} minor={6} times={minutes(32, 15, 2)} dateX={63}>
      <text transform="translate(21 398) rotate(-90)" fontSize={19} fontWeight={700} textAnchor="middle">
        <tspan fill="#ff0000">RFQ1:RCCS:TempH01 [c]</tspan>
        <tspan>, </tspan>
        <tspan fill="#0000ff">RFQ1:RCCS:TempH02 [c]</tspan>
        <tspan>,</tspan>
      </text>
      <text transform="translate(44 406) rotate(-90)" fontSize={19} fontWeight={700} fill="#00ff00" textAnchor="middle">
        RFQ1:RCCS:TempH03 [c]
      </text>
      <g transform="scale(.87014 .48855)">
        <Trace c="#ff0000" d={redPulses()} />
        <Trace c="#ff0000" d="M781 619.500H1566" />
        <Trace c="#00ff00" d={greenPulses()} />
        <Trace c="#00ff00" d="M781 788H1566M865 798H1387" />
        <Trace c="#0000ff" d={noisy(BLUE_W, 7, [[170, 275]], 21, 860)} />
        <Trace c="#0000ff" d="M781 1024H1566" />
      </g>
    </Chart>
  </PlotWindow>
);

/* ---------- control panel ---------- */

const Logo = ({ id, className }: { id: string; className: string }) => (
  <svg className={className} viewBox="0 0 238 110" role="img" aria-label="RISP">
    <defs>
      <linearGradient id={id} gradientUnits="userSpaceOnUse" x1="0" y1="60" x2="238" y2="60">
        <stop offset="0" stopColor="#dfe07c" />
        <stop offset="0.45" stopColor="#92bf8e" />
        <stop offset="1" stopColor="#3c93a4" />
      </linearGradient>
    </defs>
    <g fill={`url(#${id})`} stroke={`url(#${id})`}>
      <path d="M6 1Q70 2 115 14Q160 26 180 38Q202 42 202 62Q203 88 194 100L171 109Q186 86 184 62Q183 44 165 34Q110 6 6 1Z" stroke="none" />
      <g strokeWidth="7" strokeLinejoin="round" fontFamily="DejaVu Sans" fontWeight="700" fontSize="60">
        <text x="2" y="71">R</text>
        <text x="62" y="71">I</text>
        <text x="98" y="71">S</text>
        <text x="186" y="71">P</text>
      </g>
    </g>
  </svg>
);

const Led = () => (
  <span className="flex size-12 shrink-0 items-center justify-center rounded-full bg-linear-to-br from-[#9a9a9a] via-[#cfcfcf] to-[#f8f8f8]">
    <span className="size-[42px] rounded-full bg-linear-to-br from-[#d4ecd4] via-[#2f862f] via-50% to-[#0c640c]" />
  </span>
);

const Panel = ({ title, className, children }: { title: string; className: string; children?: React.ReactNode }) => (
  <section className={className}>
    <h2 className="h-[41px] border-b border-[#c0c0c0] bg-[#b0f828] pr-4 text-center text-[34px] leading-[40px]">{title}</h2>
    {children}
  </section>
);

const NAV_BIG = ["HOME", "ECR-IS", "LEBT", "RFQ", "RCCS", "MEBT", "QWR", "Cryogenics", "Vacuum"];
const NAV_SMALL = ["Beam Physics", "Beam diagnosis", "Data Browser"];

const MainUi = () => (
  <div className="flex min-h-screen flex-col border-x-2 border-[#d5dcee] bg-[#f0f0f0]">
    <div className="flex h-[26px] items-stretch justify-between border-b border-t-[3px] border-[#b4c0d8] border-t-[#dfe6f6] bg-linear-to-b from-[#d3e2f0] to-[#cbdbeb] pr-[8px]">
      <div className="flex w-[169px] items-center gap-[3px] rounded-t-md bg-white pl-[3px] text-[12px]">
        <svg className="h-[13px] w-[9px]" viewBox="0 0 12 16" fill="none" aria-hidden="true">
          <rect x="0.500" y="0.500" width="11" height="15" fill="#eef4ff" stroke="#8090b0" />
          <path d="M3 3H6M3 6H6" stroke="#30a030" strokeWidth="2" />
          <path d="M5 9H10V13H5Z" fill="#2a86e8" />
        </svg>
        <span>SCL-Demo_Main_UI.opi</span>
        <button aria-label="Close tab" className="mb-1">
          <CloseIcon />
        </button>
      </div>
      <div className="flex items-center gap-[5px] text-[13px]">
        <button aria-label="Zoom in"><ZoomIcon plus tone="#8a8a8a" /></button>
        <button aria-label="Zoom out"><ZoomIcon plus={false} tone="#8a8a8a" /></button>
        <select aria-label="Zoom level" className="h-5 w-[54px] border border-[#7a7a7a] bg-white text-[13px]" defaultValue="198%">
          <option>198%</option>
        </select>
        <button aria-label="Back"><ArrowIcon fill="#fff6c0" stroke="#b09020" /></button>
        <span className="text-[9px]">▼</span>
        <button aria-label="Forward"><ArrowIcon fill="#f4f4f4" stroke="#aaa" flip /></button>
        <span className="text-[9px] text-gray-600">▼</span>
        <PaneIcon />
        <PaneIcon full />
      </div>
    </div>
    <div className="mr-[28px] bg-white">
      <div className="ml-[2px] mt-[2px] flex h-[3px]">
        <div className="w-1/5 bg-[#0f0f5a]" />
        <div className="flex-1 bg-[#b0f828]" />
      </div>
      <div className="flex gap-[18px] pb-3 pl-5 pr-[7px] pt-[6px]">
        <nav className="flex w-[169px] shrink-0 flex-col">
          <Logo id="logo-main" className="mt-[3px] h-[78px] w-full" />
          <div className="mt-[11px] flex flex-col gap-[10px]">
            {NAV_BIG.map((n) => (
              <button key={n} className="h-[56px] border border-[#adadad] bg-[#e1e1e1] text-[27px]">
                {n}
              </button>
            ))}
            {NAV_SMALL.map((n) => (
              <button key={n} className="h-[56px] whitespace-nowrap border border-[#adadad] bg-[#e1e1e1] text-[22px]">
                {n}
              </button>
            ))}
          </div>
        </nav>
        <main className="min-w-0 flex-1">
          <h1 className="h-[83px] border-t-[14px] border-[#b0f828] bg-[#0f0f5a] text-center text-[48px] font-bold leading-[68px] text-white">SCL-Demo Main UI</h1>
          <div className="mt-[9px] flex h-[55px] items-stretch border border-[#c0c0c0] bg-[#f0f0f0] text-[44px] leading-[52px]">
            <div className="flex w-[380px] items-center border-r border-[#c0c0c0] pl-[16px]">
              <span className="w-[176px]">Beam :</span>
              <span className="w-[114px]">OFF</span>
              <Led />
            </div>
            <div className="flex w-[733px] items-center border-r border-[#c0c0c0] pl-[26px]">
              <span className="w-[520px] whitespace-nowrap">Commissioning Mode :</span>
              <span className="w-[114px]">OFF</span>
              <Led />
            </div>
            <time className="ml-auto w-[466px] border-l border-[#c0c0c0] text-center text-[42px]">2016/08/11 17:58:00</time>
          </div>
          <div className="relative mt-[10px] aspect-[3493/1802] border border-[#c0c0c0]">
            <Beamline />
            <div className="relative grid grid-cols-[674fr_680fr_1025fr] items-start gap-x-9 pl-5 pr-[10px] pt-[11px]">
              <Panel title="STATUS1" className="h-[311px] border border-[#c0c0c0]" />
              <Panel title="STATUS2" className="h-[311px] border border-[#c0c0c0]" />
              <Panel title="BEAM : STATUS AND PROGRESS" className="border border-[#c0c0c0]">
                <MiniBeamline />
              </Panel>
            </div>
            <Readings />
          </div>
        </main>
      </div>
      <footer className="ml-[2px] flex h-7 items-center bg-[#b0f828] text-[22px] italic leading-7">
        <span className="ml-auto mr-[20px]">*MiJeong Park (mijoy0909@ibs.re.kr), Control group, AET</span>
        <span className="mr-[34px]">*Last modified : 2016/08/11</span>
        <div className="flex h-7 w-[539px] items-center justify-between bg-[#0f0f5a] pl-[23px] pr-[5px] text-[24px] font-bold text-white">
          <span>* Rare Isotope Science Project</span>
          <Logo id="logo-foot" className="h-6 w-[43px]" />
        </div>
      </footer>
    </div>
  </div>
);

export default function App() {
  return (
    <div className="grid min-h-screen grid-cols-[1fr_2fr] overflow-hidden bg-white font-['Noto_Sans','Noto_Sans_CJK_KR',sans-serif] text-black">
      <div className="min-w-0">
        <RoomPlot />
        <WaterPlot />
      </div>
      <div className="min-w-0">
        <MainUi />
      </div>
    </div>
  );
}
